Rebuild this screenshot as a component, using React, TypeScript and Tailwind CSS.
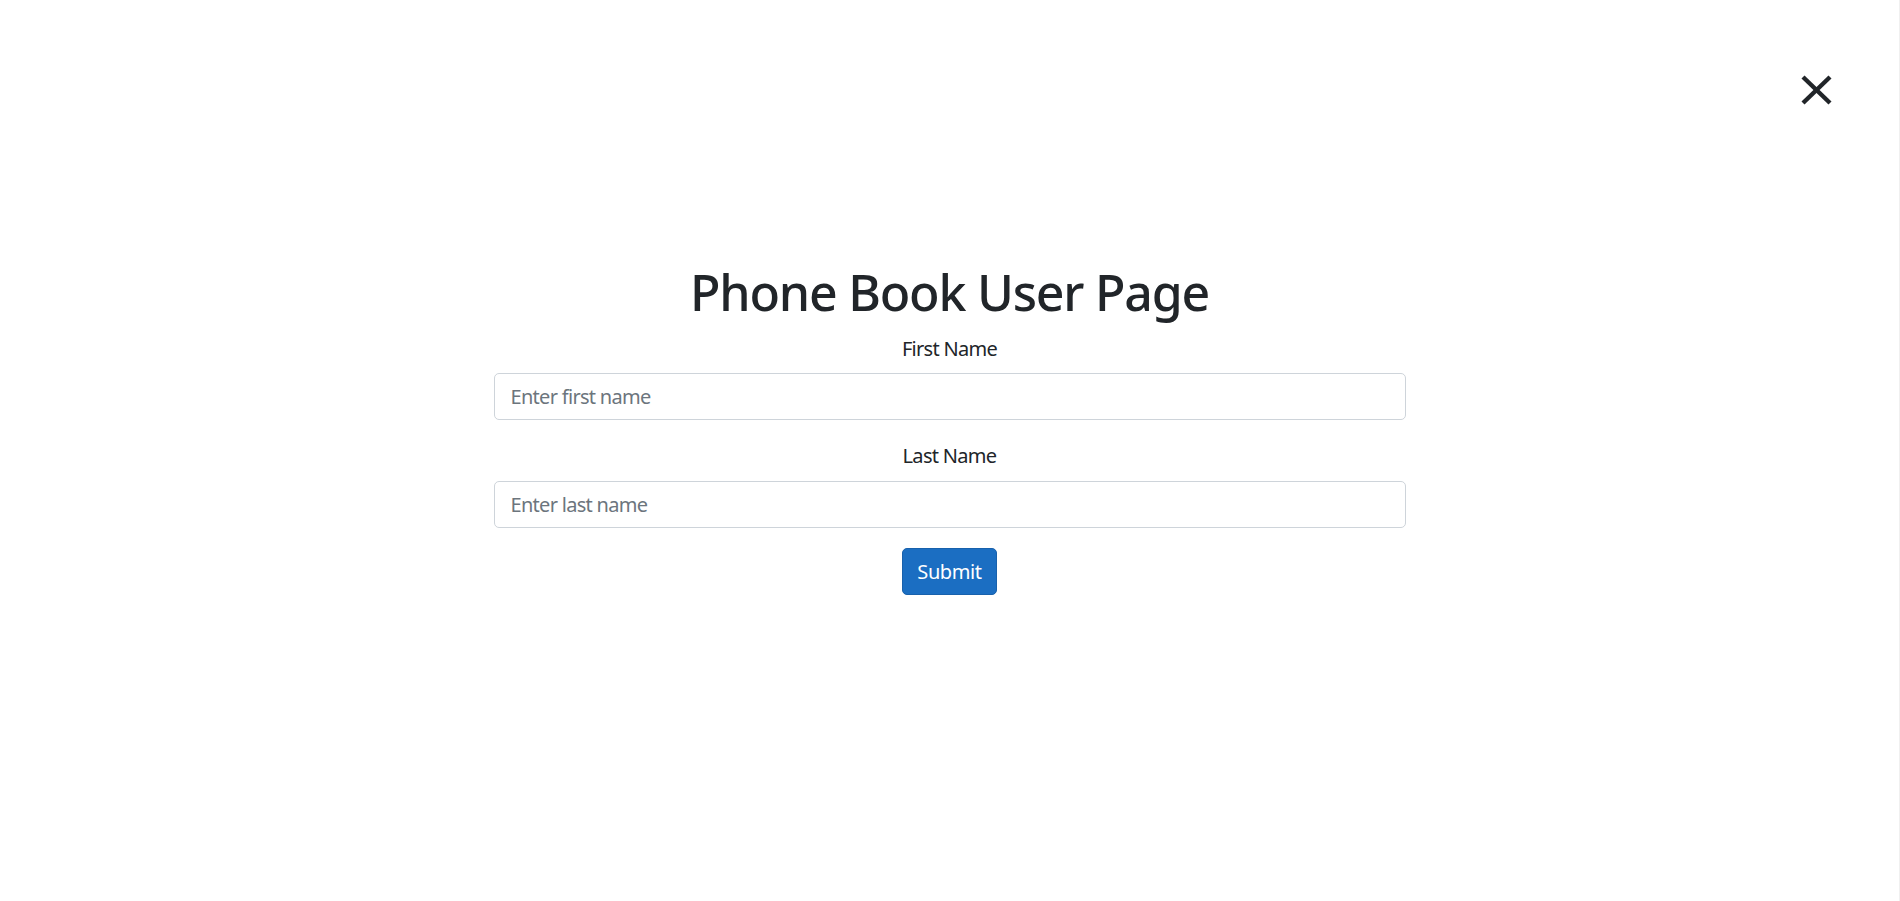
import { useState } from "react";

const font = { fontFamily: '"Segoe UI", "Noto Sans", "Open Sans", sans-serif' };

export default function App() {
  const [form, setForm] = useState({ firstName: "", lastName: "" });

  return (
    <div className="min-h-[901px] w-full bg-white text-[#212529] border-r border-[#f0f0f0]" style={font}>
      <div className="flex justify-end pt-[75px] pr-[67px]">
        <button type="button" aria-label="Close" className="w-[31px] h-[30px]">
          <svg viewBox="0 0 31 30" width="31" height="30">
            <line x1="2" y1="2" x2="29" y2="28" stroke="#212529" strokeWidth="4.4" />
            <line x1="29" y1="2" x2="2" y2="28" stroke="#212529" strokeWidth="4.4" />
          </svg>
        </button>
      </div>

      <div className="mx-auto w-[912px] pt-[157px] flex flex-col items-center">
        <h1 className="text-[50px] leading-[60px] font-medium mb-[12px] tracking-[-1.2px]">Phone Book User Page</h1>

        <form onSubmit={(e) => e.preventDefault()} className="w-full flex flex-col items-center tracking-[-0.7px]">
          <label htmlFor="firstName" className="block text-[20px] leading-[30px] mb-[9px]">
            First Name
          </label>
          <input
            id="firstName"
            type="text"
            value={form.firstName}
            onChange={(e) => setForm({ ...form, firstName: e.target.value })}
            placeholder="Enter first name"
            className="w-full h-[47px] px-[16px] text-[20px] tracking-[-0.7px] rounded-[5px] border border-[#ced4da] bg-white placeholder-[#6c757d] focus:outline-none mb-[21px]"
          />

          <label htmlFor="lastName" className="block text-[20px] leading-[30px] mb-[10px]">
            Last Name
          </label>
          <input
            id="lastName"
            type="text"
            value={form.lastName}
            onChange={(e) => setForm({ ...form, lastName: e.target.value })}
            placeholder="Enter last name"
            className="w-full h-[47px] px-[16px] text-[20px] tracking-[-0.7px] rounded-[5px] border border-[#ced4da] bg-white placeholder-[#6c757d] focus:outline-none mb-[20px]"
          />

          <button
            type="submit"
            className="h-[47px] w-[95px] rounded-[5px] bg-[#1b6ec2] border border-[#1861ac] text-white text-[20px] tracking-[-0.4px]"
          >
            Submit
          </button>
        </form>
      </div>
    </div>
  );
}
